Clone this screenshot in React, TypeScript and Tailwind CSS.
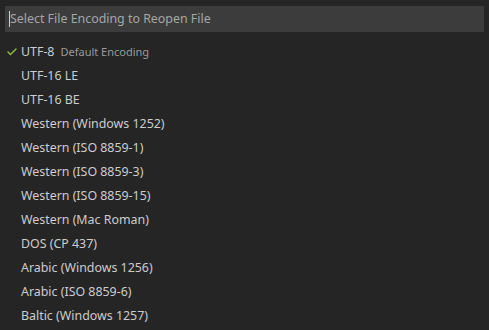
import { Check } from "lucide-react"

const encodings = [
  "UTF-16 LE",
  "UTF-16 BE",
  "Western (Windows 1252)",
  "Western (ISO 8859-1)",
  "Western (ISO 8859-3)",
  "Western (ISO 8859-15)",
  "Western (Mac Roman)",
  "DOS (CP 437)",
  "Arabic (Windows 1256)",
  "Arabic (ISO 8859-6)",
  "Baltic (Windows 1257)",
]

export default function App() {
  return (
    <div
      className="w-[489px] h-[330px] overflow-hidden bg-[#252526] text-[#cccccc]"
      style={{ fontFamily: '"Segoe UI", "Noto Sans", sans-serif' }}
    >
      <div className="pt-[6px] px-[5px]">
        <div className="h-[26px] bg-[#3c3c3c] flex items-center pl-[4px] text-[12.4px]">
          <span className="w-px h-[16px] bg-[#cccccc]" />
          <span className="text-[#a6a6a6]">Select File Encoding to Reopen File</span>
        </div>
      </div>
      <ul className="mt-[8px]">
        <li className="h-[24px] flex items-center pl-[6px] text-[12.4px]">
          <Check className="w-[12px] h-[12px] text-[#8dbb3c] mr-[3px]" strokeWidth={3} />
          <span>UTF-8</span>
          <span className="ml-[6px] text-[11px] text-[#9a9a9a]">Default Encoding</span>
        </li>
        {encodings.map((e) => (
          <li key={e} className="h-[24px] flex items-center pl-[21px] text-[12.4px]">
            {e}
          </li>
        ))}
      </ul>
    </div>
  )
}
